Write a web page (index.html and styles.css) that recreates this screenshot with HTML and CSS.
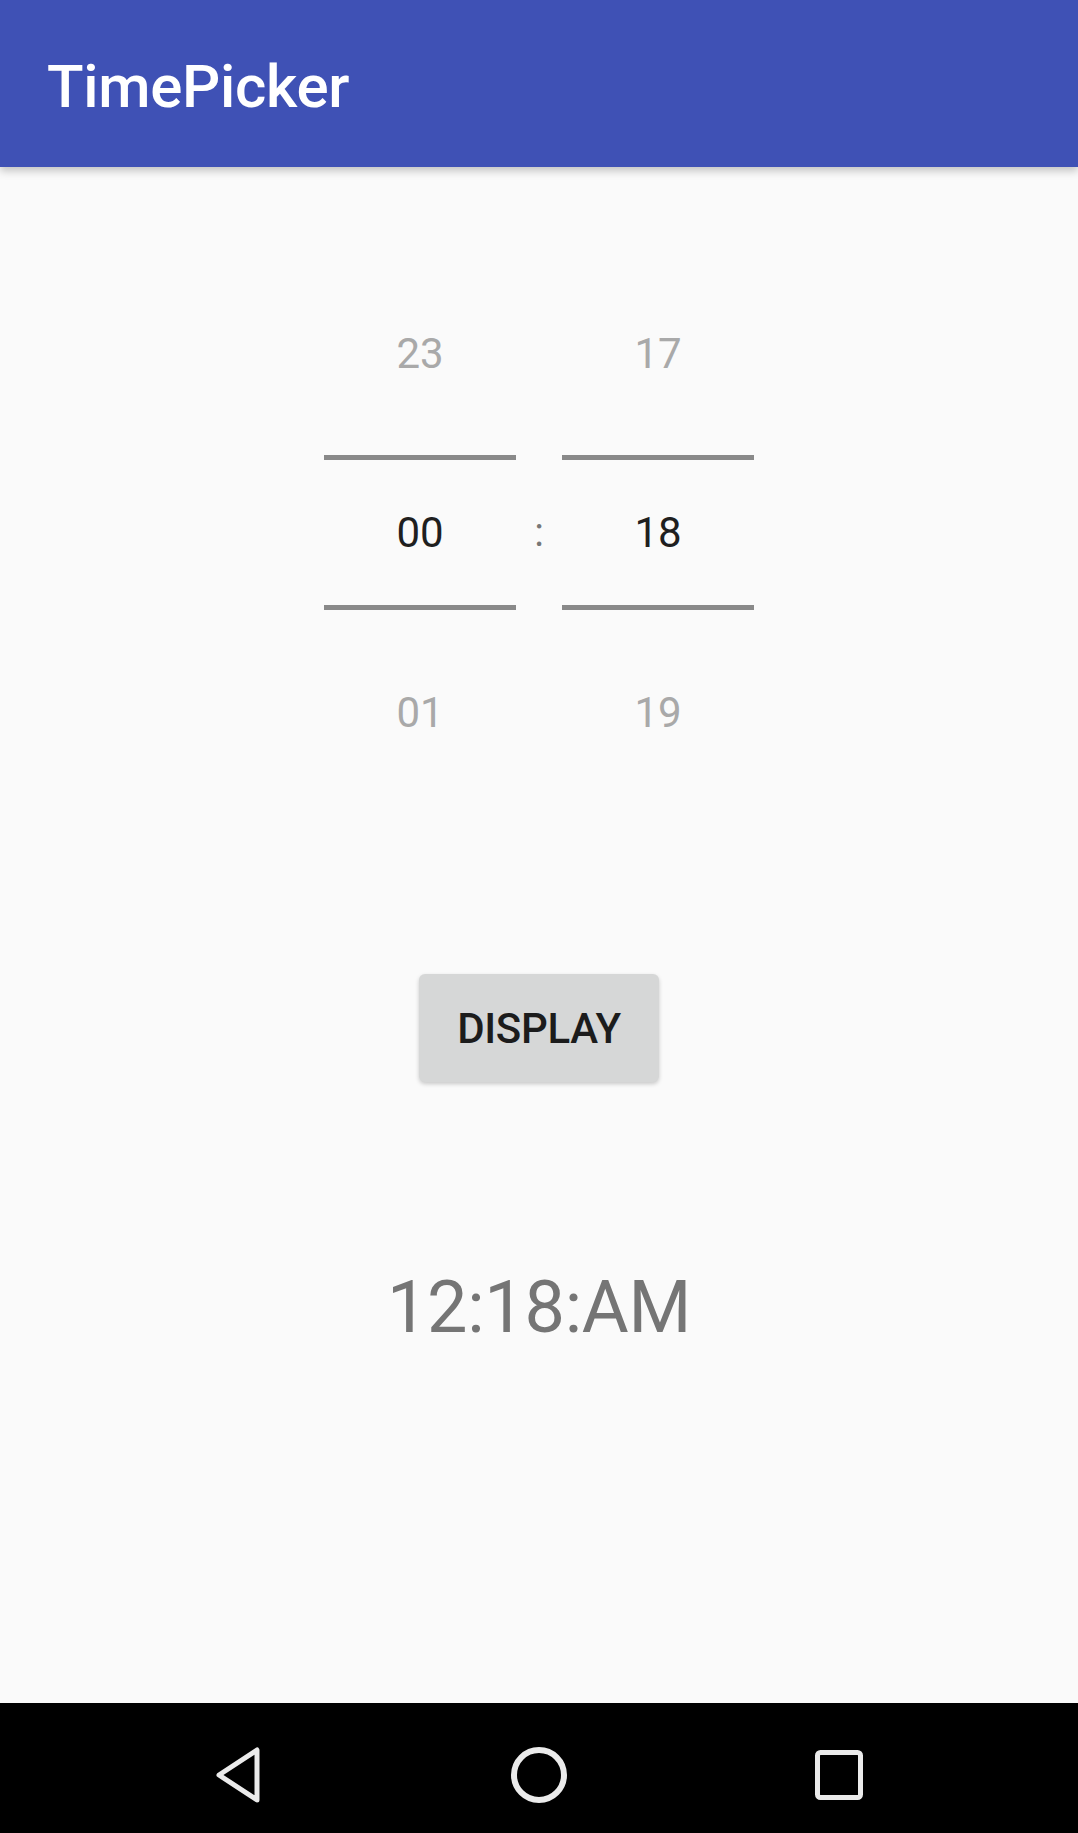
FILE: index.html
```html
<!DOCTYPE html>
<html>
<head>
<meta charset="utf-8">
<link rel="stylesheet" href="styles.css">
</head>
<body>
<div class="screen">
  <header class="appbar"><h1 class="title">TimePicker</h1></header>
  <main class="content">
    <div class="picker">
      <div class="column">
        <div class="cell cell-top faded">23</div>
        <div class="divider"></div>
        <div class="cell cell-mid selected">00</div>
        <div class="divider"></div>
        <div class="cell cell-bot faded">01</div>
      </div>
      <div class="sep">:</div>
      <div class="column">
        <div class="cell cell-top faded">17</div>
        <div class="divider"></div>
        <div class="cell cell-mid selected">18</div>
        <div class="divider"></div>
        <div class="cell cell-bot faded">19</div>
      </div>
    </div>
    <button class="btn">DISPLAY</button>
    <div class="result">12:18:AM</div>
  </main>
  <nav class="navbar">
    <div class="navcell">
      <svg width="60" height="60" viewBox="0 0 60 60"><path d="M48 5 L48 55 L10 30 Z" fill="none" stroke="#ebebeb" stroke-width="5" stroke-linejoin="round"/></svg>
    </div>
    <div class="navcell">
      <svg width="60" height="60" viewBox="0 0 60 60"><circle cx="30" cy="30" r="25" fill="none" stroke="#ebebeb" stroke-width="6"/></svg>
    </div>
    <div class="navcell">
      <svg width="60" height="60" viewBox="0 0 60 60"><rect x="8.5" y="7.5" width="43" height="45" rx="3" fill="none" stroke="#ebebeb" stroke-width="5"/></svg>
    </div>
  </nav>
</div>
</body>
</html>
```
FILE: styles.css
```css
html, body {
  margin: 0;
  padding: 0;
}
body {
  font-family: Roboto, "Liberation Sans", sans-serif;
  background: #fafafa;
}
.screen {
  width: 1078px;
  height: 1833px;
  display: flex;
  flex-direction: column;
  overflow: hidden;
}
.appbar {
  height: 167px;
  flex: none;
  background: #3f51b5;
  display: flex;
  align-items: center;
  padding: 6px 0 0 47px;
  box-sizing: border-box;
  box-shadow: 0 4px 8px rgba(0, 0, 0, 0.22);
  position: relative;
  z-index: 1;
}
.title {
  margin: 0;
  color: #ffffff;
  font-size: 60px;
  font-weight: 500;
  line-height: 60px;
  letter-spacing: -0.3px;
}
.content {
  flex: 1;
  display: flex;
  flex-direction: column;
  align-items: center;
}
.picker {
  margin-top: 86px;
  display: flex;
  align-items: flex-start;
}
.column {
  width: 192px;
  display: flex;
  flex-direction: column;
}
.cell {
  display: flex;
  align-items: center;
  justify-content: center;
  font-size: 42px;
  line-height: 1;
}
.cell-top { height: 202px; }
.cell-mid { height: 145px; }
.cell-bot { height: 206px; }
.faded { color: #a9a9a9; }
.selected { color: #1f1f1f; }
.divider {
  height: 5px;
  background: #898989;
}
.sep {
  width: 46px;
  height: 145px;
  margin-top: 207px;
  display: flex;
  align-items: center;
  justify-content: center;
  font-size: 40px;
  line-height: 1;
  color: #777777;
}
.btn {
  margin-top: 158px;
  width: 240px;
  height: 108px;
  border: none;
  border-radius: 6px;
  background: #d6d7d7;
  box-shadow: 0 2px 4px rgba(0, 0, 0, 0.2);
  font-family: Roboto, "Liberation Sans", sans-serif;
  font-size: 42px;
  font-weight: 500;
  letter-spacing: -0.3px;
  color: #1c1c1c;
  padding: 0;
}
.result {
  margin-top: 190px;
  font-size: 72px;
  line-height: 72px;
  letter-spacing: -0.3px;
  color: #757575;
}
.navbar {
  height: 130px;
  flex: none;
  background: #000000;
  display: flex;
  justify-content: center;
}
.navcell {
  width: 300px;
  display: flex;
  justify-content: center;
  padding-top: 42px;
  box-sizing: border-box;
}
.navcell svg {
  display: block;
}
```
